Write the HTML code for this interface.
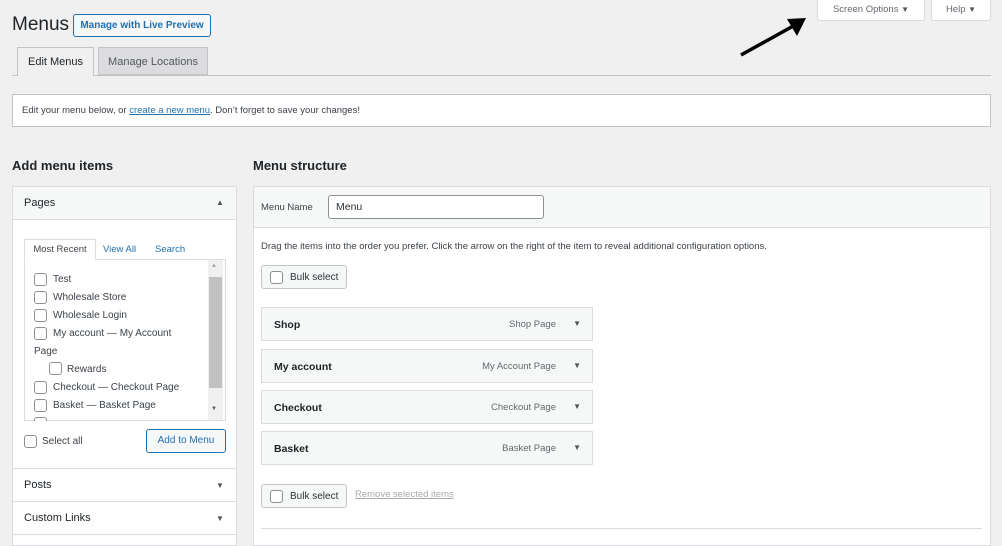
<!DOCTYPE html>
<html><head><style>
*{box-sizing:border-box;margin:0;padding:0}
body{width:1002px;height:538px;overflow:hidden;background:#f0f0f1;font-family:"Liberation Sans",sans-serif;color:#3c434a;font-size:10px;position:relative}
.a{position:absolute}
.btn{position:absolute;border:1px solid #c3c4c7;background:#f6f7f7;border-radius:3px;display:flex;align-items:center;font-size:10px;color:#2c3338}
.cb{position:absolute;width:13px;height:13px;border:1px solid #8c8f94;border-radius:3px;background:#fff}
.tri{font-size:8px;color:#50575e}
.item{position:absolute;left:261px;width:332px;height:34px;border:1px solid #dcdcde;background:#f6f7f7}
.item b{position:absolute;left:12px;top:11px;font-size:10.5px;color:#1d2327}
.item span{position:absolute;right:36px;top:11px;font-size:9.5px;color:#646970}
.item i{position:absolute;right:11px;top:11px;font-style:normal;font-size:8px;color:#50575e}
.li{position:absolute;font-size:10px;color:#3c434a}
</style></head><body>
<div class="a" style="left:12px;top:14px;font-size:19px;color:#1d2327">Menus</div>
<div class="a" style="left:73px;top:14px;width:138px;height:23px;border:1px solid #2271b1;border-radius:3px;background:#f6f7f7;color:#2271b1;font-size:10px;font-weight:bold;text-align:center;line-height:21px">Manage with Live Preview</div>
<div class="a" style="left:12px;top:75px;width:979px;height:1px;background:#c3c4c7"></div>
<div class="a" style="left:17px;top:47px;width:77px;height:29px;border:1px solid #c3c4c7;border-bottom:none;background:#f0f0f1;font-size:11px;color:#1d2327;text-align:center;line-height:28px">Edit Menus</div>
<div class="a" style="left:98px;top:47px;width:110px;height:28px;border:1px solid #c3c4c7;background:#dcdcde;font-size:11px;color:#50575e;text-align:center;line-height:28px">Manage Locations</div>
<div class="a" style="left:817px;top:-1px;width:108px;height:22px;border:1px solid #dcdcde;border-radius:0 0 3px 3px;background:#fff;font-size:9.5px;color:#646970;text-align:center;line-height:20px">Screen Options <span class="tri">▼</span></div>
<div class="a" style="left:931px;top:-1px;width:60px;height:22px;border:1px solid #dcdcde;border-radius:0 0 3px 3px;background:#fff;font-size:9.5px;color:#646970;text-align:center;line-height:20px">Help <span class="tri">▼</span></div>
<svg class="a" style="left:735px;top:12px" width="80" height="50"><line x1="6" y1="43" x2="60" y2="13" stroke="#000" stroke-width="3.5"/><polygon points="71,6 52,7 62,24" fill="#000"/></svg>
<div class="a" style="left:12px;top:94px;width:979px;height:33px;border:1px solid #c3c4c7;background:#fff;font-size:9.5px;line-height:31px;padding-left:9px;color:#3c434a">Edit your menu below, or <span style="color:#2271b1;text-decoration:underline">create a new menu</span>. Don’t forget to save your changes!</div>
<div class="a" style="left:12px;top:158px;font-size:13px;font-weight:bold;color:#1d2327">Add menu items</div>
<div class="a" style="left:253px;top:158px;font-size:13px;font-weight:bold;color:#1d2327">Menu structure</div>
<!-- left panel -->
<div class="a" style="left:12px;top:186px;width:225px;height:360px;border:1px solid #dcdcde;background:#fff"></div>
<div class="a" style="left:13px;top:187px;width:223px;height:33px;border-bottom:1px solid #dcdcde;background:#f6f7f7"></div>
<div class="a" style="left:24px;top:197px;font-size:11px;color:#1d2327">Pages</div>
<div class="a tri" style="left:216px;top:198px">▲</div>
<div class="a" style="left:24px;top:259px;width:202px;height:162px;border:1px solid #dcdcde;background:#fff"></div>
<div class="a" style="left:24px;top:239px;width:72px;height:21px;border:1px solid #dcdcde;border-bottom:1px solid #fff;background:#fff;font-size:9.5px;color:#3c434a;text-align:center;line-height:20px">Most Recent</div>
<div class="a" style="left:103px;top:244px;font-size:9.5px;color:#2271b1">View All</div>
<div class="a" style="left:155px;top:244px;font-size:9.5px;color:#2271b1">Search</div>
<div class="a" style="left:208px;top:260px;width:15px;height:160px;background:#f0f0f1"></div>
<div class="a" style="left:209px;top:277px;width:13px;height:111px;background:#c1c1c1"></div>
<div class="a" style="left:211px;top:263px;font-size:6px;color:#a0a0a0">▲</div>
<div class="a" style="left:211px;top:406px;font-size:6px;color:#505050">▼</div>
<div class="cb" style="left:34px;top:273px"></div><div class="li" style="left:53px;top:274px">Test</div>
<div class="cb" style="left:34px;top:291px"></div><div class="li" style="left:53px;top:292px">Wholesale Store</div>
<div class="cb" style="left:34px;top:309px"></div><div class="li" style="left:53px;top:310px">Wholesale Login</div>
<div class="cb" style="left:34px;top:327px"></div><div class="li" style="left:53px;top:328px">My account — My Account</div>
<div class="li" style="left:34px;top:346px">Page</div>
<div class="cb" style="left:49px;top:362px"></div><div class="li" style="left:67px;top:364px">Rewards</div>
<div class="cb" style="left:34px;top:381px"></div><div class="li" style="left:53px;top:382px">Checkout — Checkout Page</div>
<div class="cb" style="left:34px;top:399px"></div><div class="li" style="left:53px;top:400px">Basket — Basket Page</div>
<div class="cb" style="left:34px;top:417px;height:4px;border-bottom:none;border-radius:3px 3px 0 0"></div>
<div class="cb" style="left:24px;top:435px"></div><div class="li" style="left:42px;top:436px">Select all</div>
<div class="a" style="left:146px;top:429px;width:80px;height:24px;border:1px solid #2271b1;border-radius:3px;background:#f6f7f7;color:#2271b1;font-size:10px;text-align:center;line-height:22px">Add to Menu</div>
<div class="a" style="left:13px;top:468px;width:223px;height:1px;background:#dcdcde"></div>
<div class="a" style="left:24px;top:479px;font-size:11px;color:#1d2327">Posts</div><div class="a tri" style="left:216px;top:481px">▼</div>
<div class="a" style="left:13px;top:501px;width:223px;height:1px;background:#dcdcde"></div>
<div class="a" style="left:24px;top:512px;font-size:11px;color:#1d2327">Custom Links</div><div class="a tri" style="left:216px;top:514px">▼</div>
<div class="a" style="left:13px;top:534px;width:223px;height:1px;background:#dcdcde"></div>
<!-- right panel -->
<div class="a" style="left:253px;top:186px;width:738px;height:360px;border:1px solid #dcdcde;background:#fff"></div>
<div class="a" style="left:254px;top:187px;width:736px;height:41px;border-bottom:1px solid #dcdcde;background:#f6f7f7"></div>
<div class="a" style="left:261px;top:202px;font-size:9.5px;color:#3c434a">Menu Name</div>
<div class="a" style="left:328px;top:195px;width:216px;height:24px;border:1px solid #8c8f94;border-radius:3px;background:#fff;font-size:10.5px;line-height:22px;padding-left:7px;color:#2c3338">Menu</div>
<div class="a" style="left:261px;top:241px;font-size:9.5px;color:#3c434a">Drag the items into the order you prefer. Click the arrow on the right of the item to reveal additional configuration options.</div>
<div class="btn" style="left:261px;top:265px;width:86px;height:24px"><div class="cb" style="left:8px;top:5px;position:absolute"></div><span style="margin-left:28px">Bulk select</span></div>
<div class="item" style="top:307px"><b>Shop</b><span>Shop Page</span><i>▼</i></div>
<div class="item" style="top:349px"><b>My account</b><span>My Account Page</span><i>▼</i></div>
<div class="item" style="top:390px"><b>Checkout</b><span>Checkout Page</span><i>▼</i></div>
<div class="item" style="top:431px"><b>Basket</b><span>Basket Page</span><i>▼</i></div>
<div class="btn" style="left:261px;top:484px;width:86px;height:24px"><div class="cb" style="left:8px;top:5px;position:absolute"></div><span style="margin-left:28px">Bulk select</span></div>
<div class="a" style="left:355px;top:489px;font-size:9.5px;color:#a7aaad;text-decoration:underline">Remove selected items</div>
<div class="a" style="left:261px;top:528px;width:721px;height:1px;background:#dcdcde"></div>
</body></html>
